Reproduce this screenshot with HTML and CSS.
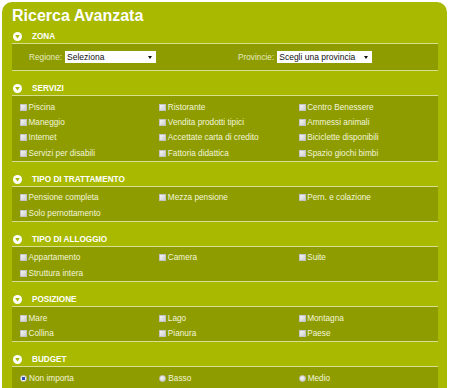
FILE: index.html
```html
<!DOCTYPE html>
<html>
<head>
   <meta charset="utf-8">
   <title>Ricerca Avanzata</title>
   <link rel="stylesheet" href="styles.css">
</head>
<body>
<div class="panel">
   <h1>Ricerca Avanzata</h1>

   <div class="section">
      <div class="sec-hd"><svg class="arrow" viewBox="0 0 9 9"><circle cx="4.5" cy="4.5" r="4.5"/><path d="M2.2 2.9h4.6L4.5 6.6z"/></svg>ZONA</div>
      <div class="sec-bd zona">
         <div class="field field-left">
            <label>Regione:</label>
            <span class="select sel-regione">Seleziona<i></i></span>
         </div>
         <div class="field">
            <label>Provincie:</label>
            <span class="select sel-prov">Scegli una provincia<i></i></span>
         </div>
      </div>
   </div>

   <div class="section">
      <div class="sec-hd"><svg class="arrow" viewBox="0 0 9 9"><circle cx="4.5" cy="4.5" r="4.5"/><path d="M2.2 2.9h4.6L4.5 6.6z"/></svg>SERVIZI</div>
      <div class="sec-bd opts">
         <div class="opt"><span class="cb"></span>Piscina</div>
         <div class="opt"><span class="cb"></span>Ristorante</div>
         <div class="opt"><span class="cb"></span>Centro Benessere</div>
         <div class="opt"><span class="cb"></span>Maneggio</div>
         <div class="opt"><span class="cb"></span>Vendita prodotti tipici</div>
         <div class="opt"><span class="cb"></span>Ammessi animali</div>
         <div class="opt"><span class="cb"></span>Internet</div>
         <div class="opt"><span class="cb"></span>Accettate carta di credito</div>
         <div class="opt"><span class="cb"></span>Biciclette disponibili</div>
         <div class="opt"><span class="cb"></span>Servizi per disabili</div>
         <div class="opt"><span class="cb"></span>Fattoria didattica</div>
         <div class="opt"><span class="cb"></span>Spazio giochi bimbi</div>
      </div>
   </div>

   <div class="section">
      <div class="sec-hd"><svg class="arrow" viewBox="0 0 9 9"><circle cx="4.5" cy="4.5" r="4.5"/><path d="M2.2 2.9h4.6L4.5 6.6z"/></svg>TIPO DI TRATTAMENTO</div>
      <div class="sec-bd opts">
         <div class="opt"><span class="cb"></span>Pensione completa</div>
         <div class="opt"><span class="cb"></span>Mezza pensione</div>
         <div class="opt"><span class="cb"></span>Pern. e colazione</div>
         <div class="opt"><span class="cb"></span>Solo pernottamento</div>
      </div>
   </div>

   <div class="section">
      <div class="sec-hd"><svg class="arrow" viewBox="0 0 9 9"><circle cx="4.5" cy="4.5" r="4.5"/><path d="M2.2 2.9h4.6L4.5 6.6z"/></svg>TIPO DI ALLOGGIO</div>
      <div class="sec-bd opts">
         <div class="opt"><span class="cb"></span>Appartamento</div>
         <div class="opt"><span class="cb"></span>Camera</div>
         <div class="opt"><span class="cb"></span>Suite</div>
         <div class="opt"><span class="cb"></span>Struttura intera</div>
      </div>
   </div>

   <div class="section">
      <div class="sec-hd"><svg class="arrow" viewBox="0 0 9 9"><circle cx="4.5" cy="4.5" r="4.5"/><path d="M2.2 2.9h4.6L4.5 6.6z"/></svg>POSIZIONE</div>
      <div class="sec-bd opts">
         <div class="opt"><span class="cb"></span>Mare</div>
         <div class="opt"><span class="cb"></span>Lago</div>
         <div class="opt"><span class="cb"></span>Montagna</div>
         <div class="opt"><span class="cb"></span>Collina</div>
         <div class="opt"><span class="cb"></span>Pianura</div>
         <div class="opt"><span class="cb"></span>Paese</div>
      </div>
   </div>

   <div class="section">
      <div class="sec-hd"><svg class="arrow" viewBox="0 0 9 9"><circle cx="4.5" cy="4.5" r="4.5"/><path d="M2.2 2.9h4.6L4.5 6.6z"/></svg>BUDGET</div>
      <div class="sec-bd opts budget">
         <div class="opt"><span class="rb on"></span>Non importa</div>
         <div class="opt"><span class="rb"></span>Basso</div>
         <div class="opt"><span class="rb"></span>Medio</div>
      </div>
   </div>
</div>
</body>
</html>
```

FILE: styles.css
```css
body {
      margin: 0;
      background: #fff;
      font-family: "Liberation Sans", Arial, sans-serif;
    }

.panel {
      margin: 2px 3px 0 2px;
      padding: 4px 9px 20px 10px;
      background: #a8b900;
      border-radius: 10px 10px 0 0;
}

h1 {
      margin: 0;
      font-size: 16px;
      line-height: 20px;
      font-weight: bold;
      color: #fff;
}

.section {
      margin-top: 11px;
}
h1 + .section {
      margin-top: 4px;
}

.sec-hd {
      display: flex;
      align-items: center;
      height: 13px;
      font-size: 8.2px;
      font-weight: bold;
      color: #fff;
}
.arrow {
      width: 9px;
      height: 9px;
      margin: 0 10px 0 1px;
}
.arrow circle { fill: #fff; }
.arrow path { fill: #a8b900; }

.sec-bd {
      background: #8e9c00;
      border-top: 1px solid #d6df8e;
      border-bottom: 1px solid #d6df8e;
      font-size: 8.25px;
      color: #f2f5dc;
}

/* zona: two selects */
.zona {
      display: flex;
      align-items: center;
      height: 26px;
      padding-left: 17px;
}
.field {
      display: flex;
      align-items: center;
}
.field-left {
      width: 209px;
}
.field label {
      margin-right: 3px;
      color: #e6eac0;
}
.select {
      position: relative;
      display: block;
      height: 12px;
      line-height: 12px;
      padding-left: 2px;
      background: #fff;
      color: #111;
      font-size: 8.5px;
      box-sizing: border-box;
}
.sel-regione { width: 91px; }
.sel-prov { width: 95px; }
.select i {
      position: absolute;
      right: 4px;
      top: 5px;
      border-left: 2.5px solid transparent;
      border-right: 2.5px solid transparent;
      border-top: 3px solid #111;
}

/* option grids */
.opts {
      display: grid;
      grid-template-columns: repeat(3, 1fr);
      grid-auto-rows: 15.3px;
      padding: 3.5px 0 0 8px;
}
.budget {
      padding-bottom: 16px;
}
.opt {
      display: flex;
      align-items: center;
      white-space: nowrap;
}
.cb {
      width: 7px;
      height: 7px;
      margin-right: 1.5px;
      box-sizing: border-box;
      border: 1px solid #c4c4c4;
      background: linear-gradient(135deg, #f4f4f4, #cfcfcf);
}
.rb {
      width: 7px;
      height: 7px;
      margin-right: 2px;
      border-radius: 50%;
      box-sizing: border-box;
      border: 1px solid #c8c8c8;
      background: radial-gradient(circle at 40% 40%, #fafafa, #c6c6c6);
}
.rb.on {
      background: radial-gradient(circle, #2a4fb0 0, #2a4fb0 1.6px, #f2f2f2 2px);
}
```
